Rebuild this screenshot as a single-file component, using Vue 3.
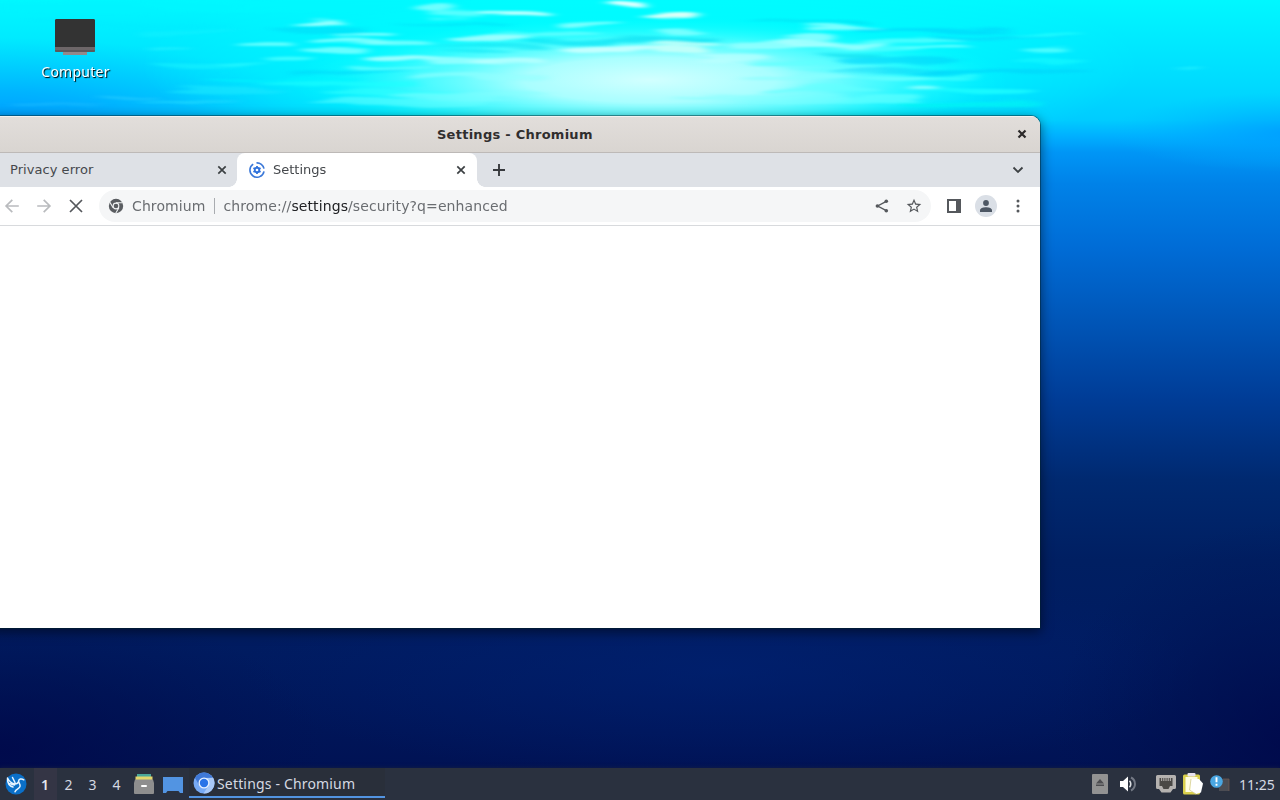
<script setup>
import { ref } from 'vue'

const workspaces = [1, 2, 3, 4]
const activeWorkspace = ref(1)

// Light reflections on the water: x, y, half width, half height, colour, opacity
const glints = [
  [90, 8, 150, 6, '#00f4ff', 0.6],
  [300, 5, 160, 8, '#00f8ff', 0.7],
  [130, 24, 100, 3, '#00ecff', 0.6],
  [190, 33, 50, 2, '#14f2ff', 0.5],
  [320, 23, 26, 2.4, '#9affff', 1],
  [268, 45, 28, 3, '#6affff', 0.9],
  [170, 48, 24, 1.6, '#30f4ff', 0.6],
  [290, 58, 24, 2.4, '#4affff', 0.8],
  [200, 66, 50, 3, '#14f0ff', 0.7],
  [240, 64, 30, 2, '#3effff', 0.5],
  [365, 35, 34, 2.4, '#8effff', 0.9],
  [350, 42, 40, 2.4, '#7effff', 0.9],
  [335, 50, 34, 3, '#72ffff', 0.9],
  [400, 43, 34, 2.4, '#7effff', 0.8],
  [402, 58, 40, 3, '#b8ffff', 0.8],
  [390, 67, 44, 2.4, '#6affff', 0.7],
  [280, 79, 80, 1.6, '#00f6ff', 0.7],
  [230, 91, 60, 2.4, '#1ce8ff', 0.6],
  [130, 96, 34, 2, '#2ccfff', 0.6],
  [190, 102, 50, 2, '#2ce0ff', 0.5],
  [60, 107, 50, 1.6, '#24bfff', 0.5],
  [340, 84, 80, 3, '#1cffff', 0.6],
  [390, 93, 70, 3, '#30ffff', 0.6],
  [400, 103, 90, 4, '#6effff', 0.5],
  [435, 9, 20, 4, '#8affff', 0.8],
  [455, 15, 30, 2.4, '#6affff', 0.8],
  [515, 14, 38, 3, '#b6ffff', 1],
  [625, 5, 20, 2.6, '#e2ffff', 1],
  [670, 16, 28, 2.5, '#dcfff8', 1],
  [590, 25, 32, 2.8, '#86ffff', 0.9],
  [540, 33, 60, 3, '#6cffff', 0.7],
  [490, 37, 40, 4, '#b6ffff', 0.8],
  [683, 33, 27, 2.6, '#7effff', 0.9],
  [610, 50, 52, 4, '#ccffff', 0.9],
  [685, 44, 34, 3, '#c0fffa', 0.9],
  [680, 51, 30, 3.4, '#c8fffa', 0.9],
  [460, 60, 40, 5, '#9cffff', 0.8],
  [510, 61, 38, 3.4, '#bcffff', 0.8],
  [765, 45, 42, 4, '#92ffff', 0.9],
  [810, 35, 24, 3, '#98ffff', 0.8],
  [815, 42, 36, 4, '#a8ffff', 0.9],
  [845, 28, 40, 2.2, '#86ffff', 0.9],
  [730, 57, 40, 2.4, '#bcffff', 0.7],
  [800, 62, 50, 2.4, '#5cffff', 0.7],
  [830, 68, 50, 2.4, '#62ffff', 0.7],
  [800, 77, 60, 3, '#8affff', 0.7],
  [820, 90, 60, 3, '#62ffff', 0.7],
  [900, 41, 64, 2.4, '#5affff', 0.8],
  [890, 48, 70, 2.4, '#5affff', 0.7],
  [860, 44, 26, 3, '#a4ffff', 0.8],
  [935, 49, 34, 1.6, '#6cffff', 0.8],
  [930, 30, 80, 3, '#00c4f8', 0.4],
  [1000, 38, 70, 2.6, '#0cc8f8', 0.35],
  [900, 60, 60, 3, '#00d4fa', 0.6],
  [900, 70, 70, 2, '#00c8f6', 0.4],
  [1000, 72, 90, 4, '#00d4fa', 0.6],
  [1050, 36, 36, 2, '#26ffff', 0.7],
  [1045, 49, 22, 1.8, '#56ffff', 0.9],
  [1050, 62, 36, 3, '#12f6ff', 0.8],
  [895, 79, 45, 2.6, '#62ffff', 0.9],
  [950, 78, 28, 2, '#42ffff', 0.7],
  [925, 88, 16, 2.4, '#8affff', 0.9],
  [980, 91, 60, 2.2, '#22ffff', 0.7],
  [880, 100, 40, 3, '#60ffff', 0.7],
  [970, 103, 70, 3, '#00f5f5', 0.7],
  [1190, 67, 14, 1.4, '#28f4ff', 0.7],
  [810, 22, 60, 2, '#00d8f0', 0.5],
  [660, 40, 60, 2, '#00dcf0', 0.6],
  [850, 56, 34, 2, '#00d6ec', 0.5],
  [570, 42, 50, 2, '#00e0f4', 0.6],
  [490, 47, 60, 2, '#10e4f4', 0.6],
  [350, 72, 60, 2, '#00d4fa', 0.5],
  [320, 30, 50, 3, '#00d8f8', 0.5],
  [450, 24, 60, 2, '#00e0f8', 0.6],
  [480, 78, 70, 3, '#92ffff', 0.6],
  [470, 96, 80, 4, '#84ffff', 0.5],
  [760, 98, 90, 4, '#80ffff', 0.5]
]
</script>

<template>
  <main class="desktop">
    <svg class="wallpaper" viewBox="0 0 1280 800" aria-hidden="true">
      <defs>
        <linearGradient id="water" x1="0" y1="0" x2="0" y2="800" gradientUnits="userSpaceOnUse">
          <stop offset="0" stop-color="#00f8ff" />
          <stop offset="0.05" stop-color="#00eaff" />
          <stop offset="0.1" stop-color="#00dcff" />
          <stop offset="0.15" stop-color="#00ccff" />
          <stop offset="0.17" stop-color="#00b0ff" />
          <stop offset="0.19" stop-color="#0096f6" />
          <stop offset="0.23" stop-color="#0082e8" />
          <stop offset="0.31" stop-color="#006cd6" />
          <stop offset="0.4" stop-color="#0056b8" />
          <stop offset="0.5" stop-color="#003c96" />
          <stop offset="0.6" stop-color="#002970" />
          <stop offset="0.7" stop-color="#001f62" />
          <stop offset="0.82" stop-color="#001b60" />
          <stop offset="0.96" stop-color="#001254" />
        </linearGradient>
        <radialGradient id="sun">
          <stop offset="0" stop-color="#d2ffff" />
          <stop offset="0.35" stop-color="#b8ffff" stop-opacity="0.92" />
          <stop offset="0.65" stop-color="#70ffff" stop-opacity="0.6" />
          <stop offset="1" stop-color="#00ffff" stop-opacity="0" />
        </radialGradient>
        <radialGradient id="halo">
          <stop offset="0" stop-color="#00ffff" stop-opacity="0.9" />
          <stop offset="0.6" stop-color="#00ffff" stop-opacity="0.6" />
          <stop offset="1" stop-color="#00ffff" stop-opacity="0" />
        </radialGradient>
        <radialGradient id="shade">
          <stop offset="0" stop-color="#0098ff" />
          <stop offset="0.4" stop-color="#00a4ff" stop-opacity="0.7" />
          <stop offset="1" stop-color="#00b8ff" stop-opacity="0" />
        </radialGradient>
        <radialGradient id="deep">
          <stop offset="0" stop-color="#000648" stop-opacity="0.7" />
          <stop offset="0.5" stop-color="#000a48" stop-opacity="0.35" />
          <stop offset="1" stop-color="#001050" stop-opacity="0" />
        </radialGradient>
        <radialGradient id="glow">
          <stop offset="0" stop-color="#002274" stop-opacity="0.6" />
          <stop offset="1" stop-color="#002074" stop-opacity="0" />
        </radialGradient>
        <filter id="ripple" x="0" y="0" width="1280" height="130" filterUnits="userSpaceOnUse" color-interpolation-filters="sRGB">
          <feTurbulence type="fractalNoise" baseFrequency="0.01 0.1" numOctaves="2" seed="4" result="noise" />
          <feDisplacementMap in="SourceGraphic" in2="noise" scale="14" xChannelSelector="R" yChannelSelector="G" />
          <feGaussianBlur stdDeviation="6 0.9" />
        </filter>
      </defs>
      <rect width="1280" height="800" fill="url(#water)" />
      <ellipse cx="0" cy="128" rx="330" ry="90" fill="url(#shade)" />
      <ellipse cx="1290" cy="132" rx="180" ry="40" fill="url(#shade)" opacity="0.7" />
      <ellipse cx="640" cy="64" rx="500" ry="110" fill="url(#halo)" />
      <ellipse cx="650" cy="80" rx="360" ry="64" fill="url(#sun)" />
      <g filter="url(#ripple)">
        <ellipse
          v-for="([x, y, rx, ry, fill, opacity], i) in glints"
          :key="i"
          :cx="x"
          :cy="y"
          :rx="rx"
          :ry="ry"
          :fill="fill"
          :opacity="opacity"
        />
      </g>
      <ellipse cx="720" cy="670" rx="480" ry="110" fill="url(#glow)" />
      <ellipse cx="1290" cy="740" rx="240" ry="220" fill="url(#deep)" />
      <ellipse cx="0" cy="750" rx="330" ry="150" fill="url(#deep)" />
    </svg>

    <div class="desktop-icon">
      <svg width="42" height="38" viewBox="0 0 42 38">
        <rect x="9" y="33" width="24" height="4" fill="#93898a" />
        <rect x="1" y="1" width="40" height="33" rx="1.5" fill="#6d6668" />
        <path d="M2.500 1h37A1.500 1.500 0 0 1 41 2.500V29H1V2.500A1.500 1.500 0 0 1 2.500 1z" fill="#333" />
        <path d="M1 33h40" stroke="#4c4c50" />
      </svg>
      <span class="desktop-label">Computer</span>
    </div>

    <section class="window">
      <header class="titlebar">
        <h1 class="title">Settings - Chromium</h1>
        <button class="title-close" aria-label="Close window">
          <svg width="10" height="10" viewBox="0 0 10 10">
            <path d="M1.500 1.500l7 7M8.500 1.500l-7 7" stroke="#2b2929" stroke-width="2.200" />
          </svg>
        </button>
      </header>

      <nav class="tabs">
        <div class="tab tab-idle">
          <span class="tab-label">Privacy error</span>
          <svg class="tab-close" width="10" height="10" viewBox="0 0 10 10">
            <path d="M1.300 1.300l7.400 7.400M8.700 1.300L1.300 8.700" />
          </svg>
        </div>
        <div class="tab tab-active">
          <svg class="tab-icon" width="16" height="16" viewBox="0 0 16 16" fill="none">
            <path d="M4.200 2.100a7.100 7.100 0 1 0 10.800 7.200M7.500.9a7.100 7.100 0 0 1 7.500 5.800" stroke="#3b78d8" stroke-width="1.600" />
            <circle cx="8" cy="8" r="2.300" stroke="#2f72dc" stroke-width="1.900" />
            <path
              d="M8 3.900v1.600M8 10.500v1.600M4.450 5.950l1.380.8M10.170 9.250l1.380.8M4.450 10.050l1.380-.8M10.170 6.750l1.380-.8"
              stroke="#2f72dc"
              stroke-width="1.800"
            />
          </svg>
          <span class="tab-label">Settings</span>
          <svg class="tab-close" width="10" height="10" viewBox="0 0 10 10">
            <path d="M1.300 1.300l7.400 7.400M8.700 1.300L1.300 8.700" />
          </svg>
        </div>
        <svg class="tab-new" width="12" height="12" viewBox="0 0 12 12">
          <path d="M6 0v12M0 6h12" stroke="#37393d" stroke-width="1.900" />
        </svg>
        <svg class="tab-search" width="12" height="8" viewBox="0 0 12 8">
          <path d="M1.500 1.500L6 6l4.500-4.500" fill="none" stroke="#3c4043" stroke-width="1.800" />
        </svg>
      </nav>

      <div class="toolbar">
        <div class="nav-buttons">
          <svg width="16" height="16" viewBox="0 0 16 16">
            <path d="M14.800 8H2.500M8.300 1.800L2.100 8l6.200 6.200" fill="none" stroke="#b9bbbe" stroke-width="1.700" />
          </svg>
          <svg width="16" height="16" viewBox="0 0 16 16">
            <path d="M1.200 8h12.300M7.700 1.800L13.900 8l-6.200 6.200" fill="none" stroke="#b9bbbe" stroke-width="1.700" />
          </svg>
          <svg width="16" height="16" viewBox="0 0 16 16">
            <path d="M2 2l12 12M14 2L2 14" fill="none" stroke="#55585c" stroke-width="1.700" />
          </svg>
        </div>

        <div class="omnibox">
          <svg width="16" height="16" viewBox="0 0 16 16">
            <circle cx="8" cy="8" r="7.200" fill="#5a5d61" />
            <circle cx="8" cy="8" r="3.400" fill="#f1f3f4" />
            <circle cx="8" cy="8" r="2.300" fill="#5a5d61" />
            <path d="M8 4.700h6.500M5.100 9.700L1.900 4.200M10.900 9.700l-3.200 5.500" stroke="#f1f3f4" stroke-width="1.100" />
          </svg>
          <span class="origin">Chromium</span>
          <span class="divider"></span>
          <span class="url">chrome://<b>settings</b>/security?q=enhanced</span>
          <svg class="share" width="14" height="14" viewBox="0 0 14 14">
            <path d="M11.300 2.300L2.700 7l8.600 4.700" fill="none" stroke="#55585c" stroke-width="1.400" />
            <circle cx="11.300" cy="2.300" r="1.800" fill="#55585c" />
            <circle cx="2.400" cy="7" r="1.800" fill="#55585c" />
            <circle cx="11.300" cy="11.700" r="1.800" fill="#55585c" />
          </svg>
          <svg width="16" height="16" viewBox="1 1 22 22">
            <path
              d="M22 9.240l-7.190-.62L12 2 9.190 8.630 2 9.240l5.460 4.730L5.820 21 12 17.270 18.180 21l-1.630-7.030L22 9.240zM12 15.400l-3.760 2.270 1-4.280-3.320-2.880 4.380-.38L12 6.100l1.710 4.040 4.380.38-3.320 2.880 1 4.280L12 15.400z"
              fill="#55585c"
            />
          </svg>
        </div>

        <svg class="side-panel" width="14" height="14" viewBox="0 0 14 14">
          <path d="M0 0h14v14H0zM2 2v10h7V2z" fill="#55585c" fill-rule="evenodd" />
        </svg>
        <span class="avatar">
          <svg width="12" height="12" viewBox="0 0 12 12" fill="#4d5764">
            <circle cx="6" cy="3" r="2.900" />
            <path d="M0 12v-1.700C0 8 3.500 7.200 6 7.200s6 .8 6 3.100V12z" />
          </svg>
        </span>
        <svg class="menu" width="4" height="14" viewBox="0 0 4 14" fill="#55585c">
          <circle cx="2" cy="2" r="1.500" />
          <circle cx="2" cy="7" r="1.500" />
          <circle cx="2" cy="12" r="1.500" />
        </svg>
      </div>

      <div class="page"></div>
    </section>

    <footer class="taskbar">
      <svg class="launcher" width="22" height="22" viewBox="0 0 22 22">
        <circle cx="11" cy="11" r="10.500" fill="#0a6fc8" />
        <path
          d="M2.500 5c1.300 2.800 3.800 5 7 6M5 10.500c1.300 1 2.800 1.600 4.500 1.600M7.500 4.500l2.500 5M2.500 5c-.1 4.500 1.500 8 5.500 9M18.800 6.800c-2.500-1.700-5-.8-5.200 1.200-.2 2 2.200 3.200 1.400 5.500-.8 2.400-4 2.300-5 5.300M10 11c1.800 0 3-.8 3.600-2.500"
          fill="none"
          stroke="#e8f4ff"
          stroke-width="1.500"
          stroke-linecap="round"
        />
      </svg>
      <div class="workspaces">
        <button
          v-for="n in workspaces"
          :key="n"
          class="workspace"
          :class="{ 'workspace-active': n === activeWorkspace }"
          @click="activeWorkspace = n"
        >
          {{ n }}
        </button>
      </div>
      <svg class="files" width="20" height="20" viewBox="0 0 20 20">
        <path d="M3 0h14v3H3z" fill="#4aa79a" />
        <path d="M1.500 2.500h17V6h-17z" fill="#e3d66c" />
        <path d="M1 5.500h18L20 9v10a1 1 0 0 1-1 1H1a1 1 0 0 1-1-1V9z" fill="#8e8e8e" />
        <rect x="7" y="11" width="6" height="2" rx="1" fill="#fff" />
      </svg>
      <svg class="show-desktop" width="20" height="16" viewBox="0 0 20 16">
        <path d="M0 0h20v16h-3l-1.500-2h-11L3 16H0z" fill="#5294e2" />
      </svg>
      <div class="task">
        <svg width="22" height="22" viewBox="0 0 22 22">
          <circle cx="11" cy="11" r="10.500" fill="#77aaf5" />
          <path d="M1.900 5.800A10.500 10.500 0 0 1 20 5.800L11 6.500 6.200 13.200z" fill="#3f78d6" />
          <path d="M20.100 5.800A10.500 10.500 0 0 1 10.500 21.500l5.200-8L11 6z" fill="#a9c9f8" />
          <circle cx="11" cy="11" r="5.500" fill="#e6f0ff" />
          <circle cx="11" cy="11" r="4.200" fill="#2a74e8" />
        </svg>
        <span class="task-label">Settings - Chromium</span>
      </div>

      <div class="tray">
        <svg class="eject" width="16" height="20" viewBox="0 0 16 20">
          <rect width="16" height="20" rx="1" fill="#929292" />
          <path d="M8 5l4 4.500H4zM4 10.500h8V12H4z" fill="#4c4c50" />
        </svg>
        <svg class="volume" width="17" height="16" viewBox="0 0 17 16">
          <path d="M0 5h3l5-4.500v15L3 11H0z" fill="#fff" />
          <path d="M9.500 4.700c1.700 1.700 1.700 4.900 0 6.600" fill="none" stroke="#dfe1e5" stroke-width="1.600" />
          <path d="M11 1.500c5.300 2.600 5.300 10.400 0 13" fill="none" stroke="#747985" stroke-width="2" />
        </svg>
        <svg class="network" width="20" height="18" viewBox="0 0 20 18">
          <path d="M1.500 0h17A1.500 1.500 0 0 1 20 1.500v11a1.500 1.500 0 0 1-1.500 1.500H17l-2.500 3.500h-9L3 14H1.500A1.500 1.500 0 0 1 0 12.500v-11A1.500 1.500 0 0 1 1.500 0z" fill="#b5b2b0" />
          <path d="M3.500 3h13v8h-2.500l-1.500 3h-5L6 11H3.500z" fill="#4b4946" />
          <path d="M5.500 2.500V6M7.300 2.500V6M9.100 2.500V6M10.900 2.500V6M12.700 2.500V6M14.500 2.500V6" stroke="#b5b2b0" stroke-width=".9" />
        </svg>
        <svg class="clipboard" width="20" height="22" viewBox="0 0 20 22">
          <rect x="0" y="1.500" width="17" height="20" rx="1.500" fill="#d9cf4c" />
          <path d="M2.500 4h12v15h-12z" fill="#fffde0" />
          <rect x="4.500" y="0" width="8" height="3.500" rx="1" fill="#e8e2ee" />
          <path d="M8 6h8l4 4.500-2 9L13 21l-5-3z" fill="#fff" />
          <path d="M8 6l-1.500 11 6.500 4" fill="none" stroke="#d3cc94" stroke-width=".8" />
        </svg>
        <svg class="notifier" width="20" height="18" viewBox="0 0 20 18">
          <path d="M9 4h10v12H9z" fill="#4b4c53" />
          <path d="M13 4h6v12" fill="none" stroke="#765d52" stroke-width=".7" />
          <circle cx="6.500" cy="6.500" r="6.300" fill="#4aa6e2" />
          <path d="M6.500 2.300v5M6.500 8.800v2" stroke="#fff" stroke-width="1.900" />
        </svg>
        <time class="clock">11:25</time>
      </div>
    </footer>
  </main>
</template>

<style>
body {
  margin: 0;
  overflow: hidden;
}
</style>

<style scoped>
.desktop {
  position: relative;
  width: 1280px;
  height: 800px;
  overflow: hidden;
  font-family: "DejaVu Sans", sans-serif;
}

.desktop svg {
  display: block;
  flex-shrink: 0;
}

button {
  padding: 0;
  border: 0;
  background: none;
  font: inherit;
  color: inherit;
}

.wallpaper {
  position: absolute;
  inset: 0;
  width: 1280px;
  height: 800px;
}

.desktop-icon {
  position: absolute;
  top: 18px;
  left: 34px;
  width: 82px;
  display: flex;
  flex-direction: column;
  align-items: center;
  gap: 6px;
}

.desktop-label {
  padding-left: 1px;
  color: #ffffff;
  font-family: "Noto Sans", sans-serif;
  font-size: 14px;
  line-height: 20px;
  letter-spacing: 0.25px;
  text-shadow: 1px 1px 1px #000000;
}

/* The window hangs over the left edge of the screen */
.window {
  position: absolute;
  top: 116px;
  left: -10px;
  width: 1050px;
  height: 512px;
  display: flex;
  flex-direction: column;
  border-radius: 0 9px 0 0;
  overflow: hidden;
  background: #ffffff;
  box-shadow: 0 0 0 1px rgba(0, 35, 45, 0.45), 0 3px 12px 1px rgba(0, 0, 0, 0.5);
}

.titlebar {
  box-sizing: border-box;
  height: 37px;
  flex-shrink: 0;
  display: flex;
  align-items: center;
  padding: 0 13px 0 447px;
  background: linear-gradient(#e2dedb, #d9d5d1);
  border-bottom: 1px solid #bdb9b7;
  box-shadow: inset 0 1px #f4f2f0;
}

.title {
  flex: 1;
  margin: 0;
  padding-top: 1px;
  color: #302e2e;
  font-size: 13px;
  line-height: 20px;
  font-weight: 700;
  letter-spacing: 0.26px;
  white-space: nowrap;
}

.tabs {
  height: 34px;
  flex-shrink: 0;
  display: flex;
  align-items: center;
  background: #dee1e6;
  color: #45484c;
  font-size: 13px;
}

.tab {
  box-sizing: border-box;
  height: 34px;
  display: flex;
  align-items: center;
}

.tab-label {
  padding-bottom: 2px;
}

.tab-idle {
  width: 247px;
  padding: 0 10px 0 20px;
  letter-spacing: 0.05px;
}

.tab-active {
  position: relative;
  width: 240px;
  padding: 0 11px 0 12px;
  border-radius: 8px 8px 0 0;
  background: #ffffff;
}

.tab-active::before,
.tab-active::after {
  content: "";
  position: absolute;
  bottom: 0;
  width: 8px;
  height: 8px;
}

.tab-active::before {
  left: -8px;
  background: radial-gradient(circle at 0 0, transparent 7.5px, #ffffff 8px);
}

.tab-active::after {
  right: -8px;
  background: radial-gradient(circle at 100% 0, transparent 7.5px, #ffffff 8px);
}

.tab-icon {
  margin-right: 8px;
}

.tab-close {
  margin-left: auto;
  stroke: #3c4043;
  stroke-width: 1.7;
}

.tab-new {
  margin-left: 16px;
}

.tab-search {
  margin-left: auto;
  margin-right: 16px;
}

.toolbar {
  box-sizing: border-box;
  height: 39px;
  flex-shrink: 0;
  display: flex;
  align-items: center;
  padding: 0 19px 0 14px;
  border-bottom: 1px solid #d8dadd;
  background: #ffffff;
}

.nav-buttons {
  display: flex;
  gap: 16px;
  width: 95px;
}

.omnibox {
  box-sizing: border-box;
  width: 832px;
  height: 32px;
  display: flex;
  align-items: center;
  padding: 0 9px;
  border-radius: 16px;
  background: #f5f6f7;
  color: #6a6d71;
  font-size: 14px;
  letter-spacing: 0.1px;
}

.origin {
  margin-left: 8px;
}

.divider {
  width: 1px;
  height: 16px;
  margin: 0 9px 0 8px;
  background: #a9acb0;
}

.url {
  flex: 1;
}

.url b {
  color: #202124;
  font-weight: 400;
}

.share {
  margin-right: 17px;
}

.side-panel {
  margin-left: 16px;
}

.avatar {
  width: 22px;
  height: 22px;
  margin-left: 14px;
  display: flex;
  align-items: center;
  justify-content: center;
  border-radius: 50%;
  background: #dadfe6;
}

.menu {
  margin-left: 19px;
}

.page {
  flex: 1;
  background: #ffffff;
}

.taskbar {
  position: absolute;
  inset: auto 0 0;
  height: 32px;
  display: flex;
  align-items: center;
  background: #2a313f;
  box-shadow: 0 0 4px rgba(30, 36, 60, 0.8);
  color: #d5d9e2;
  font-family: "Noto Sans", sans-serif;
  font-size: 14px;
}

.launcher {
  margin: 0 7px 0 5px;
}

.workspaces {
  display: flex;
}

.workspace {
  width: 24px;
  height: 32px;
  padding-right: 1px;
}

.workspace:first-child {
  width: 23px;
}

.workspace-active {
  background: #343545;
  color: #e6e8ee;
  font-weight: 600;
}

.files {
  margin-left: 5px;
}

.show-desktop {
  margin: 1px 0 0 9px;
}

.task {
  box-sizing: border-box;
  width: 196px;
  height: 30px;
  margin: 0 0 2px 6px;
  padding: 2px 0 0 4px;
  display: flex;
  align-items: center;
  border-bottom: 2px solid #5294e2;
  background: #292f3a;
}

.task-label {
  margin-left: 2px;
  letter-spacing: 0.17px;
  white-space: nowrap;
}

.tray {
  flex: 1;
  display: flex;
  align-items: center;
  justify-content: flex-end;
  padding-right: 4px;
}

.volume {
  margin-left: 12px;
}

.network {
  margin-left: 19px;
}

.clipboard {
  margin-left: 7px;
}

.notifier {
  margin-left: 7px;
}

.clock {
  width: 37px;
  margin-left: 9px;
  white-space: nowrap;
}
</style>
